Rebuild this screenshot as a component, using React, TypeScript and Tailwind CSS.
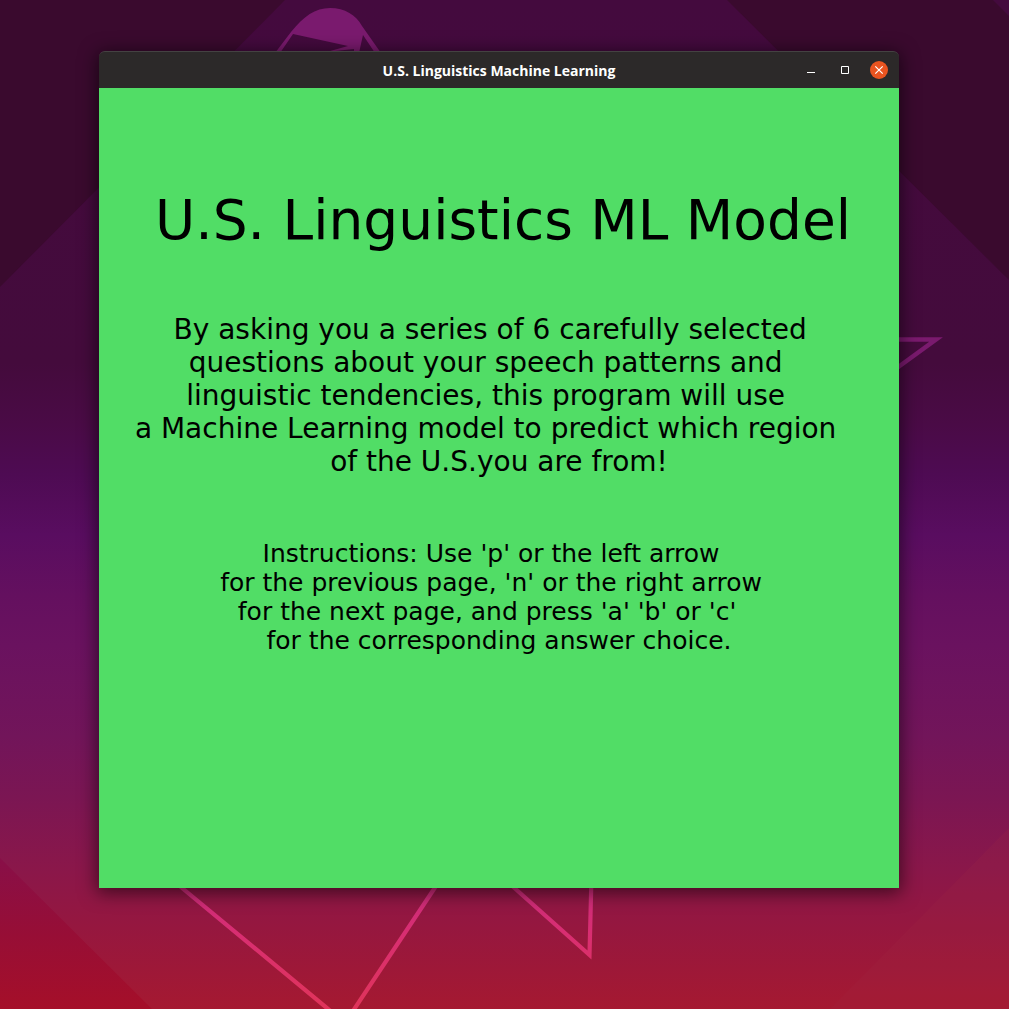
import React from "react";

const introLines = [
  "By asking you a series of 6 carefully selected  ",
  "questions about your speech patterns and   ",
  "linguistic tendencies, this program will use   ",
  "a Machine Learning model to predict which region   ",
  "of the U.S.you are from!",
];

const instructionLines = [
  "Instructions: Use 'p' or the left arrow  ",
  "for the previous page, 'n' or the right arrow  ",
  "for the next page, and press 'a' 'b' or 'c'   ",
  "for the corresponding answer choice.",
];

function Wallpaper() {
  return (
    <svg
      className="absolute inset-0 h-full w-full"
      viewBox="0 0 1009 1009"
      preserveAspectRatio="xMidYMid slice"
      aria-hidden="true"
    >
      <defs>
        <linearGradient id="sky" x1="0" y1="0" x2="0" y2="1">
          <stop offset="0" stopColor="#440a3e" />
          <stop offset="0.36" stopColor="#440b3c" />
          <stop offset="0.42" stopColor="#4a0b46" />
          <stop offset="0.47" stopColor="#4e0b53" />
          <stop offset="0.53" stopColor="#590d60" />
          <stop offset="0.59" stopColor="#64105f" />
          <stop offset="0.64" stopColor="#6a125f" />
          <stop offset="0.73" stopColor="#72155a" />
          <stop offset="0.79" stopColor="#7b1653" />
          <stop offset="0.86" stopColor="#8a174a" />
          <stop offset="0.92" stopColor="#96173f" />
          <stop offset="1" stopColor="#a51931" />
        </linearGradient>
        <linearGradient id="ember" x1="0" y1="0" x2="0" y2="1">
          <stop offset="0" stopColor="#880f48" />
          <stop offset="0.5" stopColor="#970e36" />
          <stop offset="1" stopColor="#a50f29" />
        </linearGradient>
        <linearGradient id="trace" gradientUnits="userSpaceOnUse" x1="0" y1="880" x2="0" y2="1009">
          <stop offset="0" stopColor="#c92b7c" />
          <stop offset="0.4" stopColor="#d82e72" />
          <stop offset="1" stopColor="#e0345a" />
        </linearGradient>
      </defs>
      <rect width="1009" height="1009" fill="url(#sky)" />
      <path d="M0 0H285L0 287Z" fill="#3a0a2e" />
      <path d="M727 0H993L1009 16V280Z" fill="#3a0a2e" />
      <path d="M0 858L152 1009H0Z" fill="url(#ember)" />
      <path d="M1009 828V1009H830Z" fill="#a32a45" fillOpacity="0.16" />
      <path
        d="M275 53L291 32C304 16 315 8 330 8C345 8 356 15 362 26L381 53H375L363 35L359 53H323L348 46L293 34L280 53Z"
        fill="#7a1a6e"
      />
      <path d="M326 52L354 49V53H326Z" fill="#440a3e" />
      <path d="M890 339.500H936L890 373" fill="none" stroke="#7a1a6e" strokeWidth="4.500" />
      <g fill="none" stroke="url(#trace)" strokeWidth="4.200">
        <path d="M170 878L345 1023L440 880" />
        <path d="M501 876L589.500 955L591.500 876" />
      </g>
    </svg>
  );
}

function TitleBar() {
  return (
    <header className="grid h-[37px] grid-cols-[1fr_auto_1fr] items-center rounded-t-md border-t border-[#444242] bg-[#2c2929] text-white">
      <span />
      <h2 className="font-['Open_Sans','Noto_Sans',sans-serif] text-[14px] font-bold">
        U.S. Linguistics Machine Learning
      </h2>
      <div className="flex items-center justify-end gap-4 pr-[11px]">
        <button type="button" aria-label="Minimize" className="flex size-[18px] items-center justify-center">
          <svg viewBox="0 0 18 18" className="size-full" aria-hidden="true">
            <path d="M5 11h8v1H5z" fill="currentColor" />
          </svg>
        </button>
        <button type="button" aria-label="Maximize" className="flex size-[18px] items-center justify-center">
          <svg viewBox="0 0 18 18" className="size-full" aria-hidden="true">
            <path d="M5.500 5.500h7v7h-7z" fill="none" stroke="currentColor" />
          </svg>
        </button>
        <button
          type="button"
          aria-label="Close"
          className="flex size-[18px] items-center justify-center rounded-full bg-[#e95420]"
        >
          <svg viewBox="0 0 18 18" className="size-full" aria-hidden="true">
            <path d="M5.300 5.300l7.400 7.400M12.700 5.300l-7.400 7.400" stroke="currentColor" strokeWidth="1.200" />
          </svg>
        </button>
      </div>
    </header>
  );
}

export default function App() {
  return (
    <div className="relative flex min-h-screen flex-col overflow-hidden bg-[#440a3e] pt-[51px] pr-[110px] pb-[121px] pl-[99px]">
      <Wallpaper />
      <section className="relative flex flex-1 flex-col rounded-t-md shadow-[0_3px_18px_2px_rgba(0,0,0,0.55)]">
        <TitleBar />
        <main className="flex flex-1 flex-col items-center bg-[#51dd66] pt-[100px] text-center font-['DejaVu_Sans',sans-serif] text-black">
          <h1 className="pl-2 text-[55px] leading-[65px]">U.S. Linguistics ML Model</h1>
          <p className="mt-[60px] text-[28px] leading-[33px] whitespace-pre">{introLines.join("\n")}</p>
          <p className="mt-[61px] text-[25px] leading-[29px] whitespace-pre">{instructionLines.join("\n")}</p>
        </main>
      </section>
    </div>
  );
}
